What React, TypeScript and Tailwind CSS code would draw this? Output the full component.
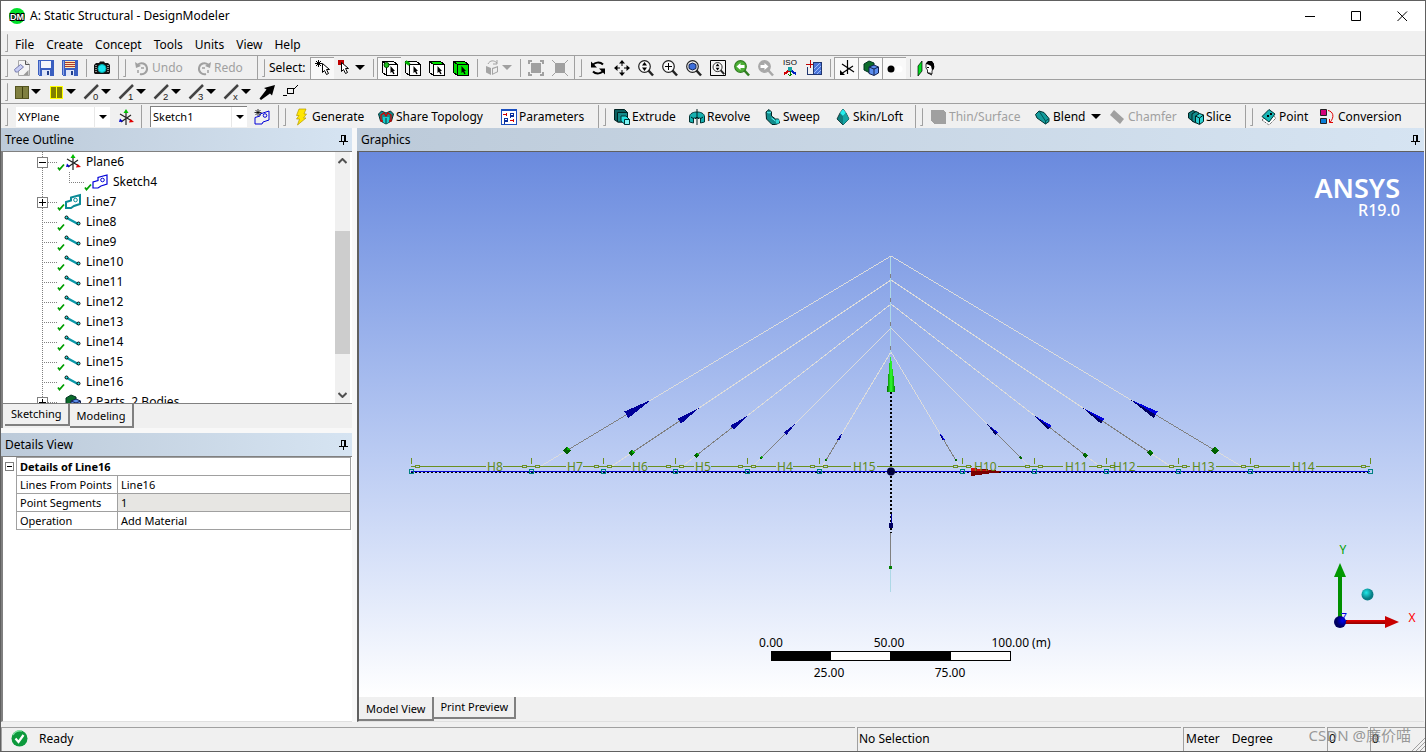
import React from "react";

type Kids = { children?: React.ReactNode };

/* ---------- drawing helpers ---------- */

function Ico({ children, soft = false }: Kids & { soft?: boolean }) {
  return (
    <svg
      width="16"
      height="16"
      viewBox="0 0 16 16"
      fill="none"
      className="shrink-0 overflow-visible"
      shapeRendering={soft ? "auto" : "crispEdges"}
      aria-hidden="true"
    >
      {children}
    </svg>
  );
}

function Caret({ color = "#000" }: { color?: string }) {
  return (
    <svg width="10" height="5" viewBox="0 0 10 5" className="shrink-0" aria-hidden="true">
      <path d="M0 0h10L5 5z" fill={color} />
    </svg>
  );
}

const Cursor = ({ x = 0, y = 0 }: { x?: number; y?: number }) => (
  <path
    d={`M${x} ${y}v9l2-2 2 4 2-1-2-4h3z`}
    fill="#fff"
    stroke="#000"
    strokeWidth="1"
    shapeRendering="auto"
  />
);

const NewIcon = () => (
  <Ico soft>
    <path d="M4.500.5h7l4 4v11h-11z" fill="#f4f4f4" stroke="#a8a8a8" />
    <path d="M11.500.5v4h4" stroke="#555" fill="#ddd" />
    <path d="M.5 9.500l6-5 3 2.500-6 5H1.500z" fill="#c8cdf4" stroke="#777cae" />
    <path d="M9.500 15h5v-5z" fill="#999" />
  </Ico>
);
const SaveIcon = ({ multi = false }: { multi?: boolean }) => (
  <Ico>
    <path d="M0 0h16v16H1l-1-1z" fill="#3a5fc0" />
    <path d="M1 1h1v14H1z" fill="#8fa6e6" />
    <path d="M3 1h10v7H3z" fill={multi ? "#ffe9b0" : "#f4f6fb"} />
    {multi && <path d="M3 2.500h10M3 4.500h10M3 6.500h10" stroke="#b03a2e" />}
    <path d="M4 10h8v6H4z" fill="#dfe6f7" />
    <path d="M9 11h2v4H9z" fill="#22408c" />
  </Ico>
);
const CameraIcon = () => (
  <Ico soft>
    <path d="M0 5l2-2h3l1-1.500h4L11 3h3l2 2v8l-1 1H1l-1-1z" fill="#111" />
    <path d="M2 5v7M14 5v7" stroke="#fff" strokeDasharray="1 1" />
    <circle cx="8" cy="8.500" r="4" fill="#19e5f0" stroke="#0aa" />
  </Ico>
);
const UndoIcon = ({ flip = false }: { flip?: boolean }) => (
  <Ico soft>
    <g transform={flip ? "translate(16 0) scale(-1 1)" : undefined}>
      <path d="M4 4.500a5.500 5.500 0 1 1 2 9.500" stroke="#a0a0a0" strokeWidth="2" />
      <path d="M1 2l1 6 5-2z" fill="#a0a0a0" />
      <path d="M4 10v3M7 8h3" stroke="#a0a0a0" strokeWidth="1.500" />
    </g>
  </Ico>
);
const StarCursor = () => (
  <Ico>
    <path d="M3.500 0v7M0 3.500h7M1 1l5 5M6 1L1 6" stroke="#000" />
    <Cursor x={7.500} y={3.500} />
  </Ico>
);
const BoxCursor = () => (
  <Ico>
    <path d="M0 0h6v5H0z" fill="#c00000" />
    <Cursor x={3.500} y={2.500} />
  </Ico>
);
const CubeSelect = ({ mode }: { mode: "point" | "edge" | "face" | "body" }) => {
  const side = mode === "body" ? "#00d800" : "#f6f6f6";
  const top = mode === "face" || mode === "body" ? "#00e000" : "#f6f6f6";
  return (
    <Ico>
      <path d="M.5 1.500l4 3v11l-4-3z" fill={side} stroke="#000" />
      <path d="M.5 1.500h11l4 3h-11z" fill={top} stroke="#000" />
      <path d="M4.500 4.500h11v11h-11z" fill={mode === "body" ? "#00e800" : "#fff"} stroke="#000" />
      {mode === "point" && <circle cx="4.500" cy="5" r="2.500" fill="#20c020" stroke="#005000" shapeRendering="auto" />}
      {mode === "edge" && <path d="M.5 1.500l4 3" stroke="#00b000" strokeWidth="3" shapeRendering="auto" />}
      <path d="M8.500 6v7l1.500-1.300 1.300 2.600 1.300-.6-1.300-2.700h1.700z" fill="#000" shapeRendering="auto" />
    </Ico>
  );
};
const GreyCube = () => (
  <Ico soft>
    <path d="M1 6l5 2v7l-5-2.500zM7 8l6-2v6l-6 3z" fill="#a4a4a4" />
    <path d="M3 4c2-4 6-4 9-1M12 0v4H8" stroke="#a0a0a0" />
    <path d="M8 9l4-1.500v4l-4 2z" fill="#eee" />
  </Ico>
);
const GreyExpand = ({ inward = false }: { inward?: boolean }) => (
  <Ico>
    <path d="M3 3h10v10H3z" fill="#a0a0a0" />
    <path
      d={inward ? "M0 0l4 4M16 0l-4 4M0 16l4-4M16 16l-4-4" : "M1 4V1H4M12 1h3V4M1 12v3H4M12 15h3V12"}
      stroke="#a0a0a0"
      strokeWidth={inward ? 1 : 2}
    />
  </Ico>
);
const RotateIcon = () => (
  <Ico soft>
    <path d="M2.500 6C4 2 10 1.500 13 4.500M13.500 10C12 14 6 14.500 3 11.500" stroke="#000" strokeWidth="2" />
    <path d="M1 1.500v6h6zM15 14.500v-6H9z" fill="#000" />
  </Ico>
);
const PanIcon = () => (
  <Ico soft>
    <path d="M8 1v5M8 10v5M1 8h5M10 8h5" stroke="#000" />
    <path d="M8 0l3 3.500H5zM8 16l3-3.500H5zM0 8l3.500-3v6zM16 8l-3.500-3v6z" fill="#000" />
  </Ico>
);
const ZoomIcon = ({ kind }: { kind: "updown" | "plus" | "fit" | "boxed" | "green" | "grey" }) => {
  const line = kind === "green" ? "#2f7d1f" : kind === "grey" ? "#a8a8a8" : "#222";
  const fill = kind === "green" ? "#4caf35" : kind === "grey" ? "#a8a8a8" : "#fafafa";
  return (
    <Ico soft>
      {kind === "boxed" && <path d="M.5.5h15v15H.5z" stroke="#000" fill="#f4f4f4" />}
      <g transform={kind === "boxed" ? "translate(2.500 2) scale(.78)" : undefined}>
        <path d="M10 10l5 5.500" stroke={line} strokeWidth="2.500" />
        <circle cx="6.500" cy="6.500" r="5.800" fill={fill} stroke={line} strokeWidth="1.200" />
        {(kind === "updown" || kind === "boxed") && <path d="M6.500 2l2.500 3.500H4zM6.500 11L9 7.500H4z" fill="#000" />}
        {kind === "plus" && <path d="M6.500 3v7M3 6.500h7" stroke="#000" />}
        {kind === "fit" && <path d="M6.500 3l3.500 1.500v4L6.500 10 3 8.500v-4z" fill="#3d6fdc" stroke="#11204f" />}
        {(kind === "green" || kind === "grey") && (
          <path
            d="M2.500 6.500L6.500 3v2h4v3h-4v2z"
            fill="#fff"
            transform={kind === "grey" ? "translate(13 0) scale(-1 1)" : undefined}
          />
        )}
      </g>
    </Ico>
  );
};
const IsoIcon = () => (
  <Ico>
    <text x="8" y="5" textAnchor="middle" fontSize="8" fill="#000" fontFamily="Liberation Sans, sans-serif">
      ISO
    </text>
    <path d="M8 10L2 14" stroke="#d00000" strokeWidth="2" />
    <path d="M8 10l6 4" stroke="#0020c0" strokeWidth="2" />
    <path d="M8 10v6M6 14l2 2 2-2" stroke="#008000" />
    <circle cx="8" cy="9" r="2.500" fill="#12a5a5" />
  </Ico>
);
const LookAtPlane = () => (
  <Ico>
    <path d="M7.500 2.500h8v12h-8z" fill="#4b74d8" stroke="#20366f" />
    <path d="M8 9l6-6M8 13l7-7M11 14l4-4" stroke="#9fbdf8" />
    <path d="M0 4.500h7M4.500 0v8" stroke="#c00000" />
    <path d="M1.500 7v7.500h6" stroke="#20366f" />
  </Ico>
);
const AxisBlack = () => (
  <Ico soft>
    <path d="M8.500 0v14M3 4l12 8M14 6l-12 8" stroke="#000" strokeWidth="1.200" />
    <path d="M1 10v5h5z" fill="#000" />
  </Ico>
);
const CubesIcon = () => (
  <Ico soft>
    <path d="M1 4l5-3 5 2v7l-4 3-6-3z" fill="#0b6b2a" stroke="#032" />
    <path d="M6 7l5-2 4.500 2v6L11 15.500 6 13.500z" fill="#5b8def" stroke="#11204f" />
    <path d="M6 7l5 2 4.500-2M11 9v6" stroke="#11204f" />
  </Ico>
);
const DotIcon = () => (
  <Ico soft>
    <circle cx="4" cy="9" r="3.500" fill="#000" />
    <circle cx="12" cy="9" r="3.500" fill="#fff" />
  </Ico>
);
const LookIcon = () => (
  <Ico soft>
    <path d="M0 6l4-5v10l-4 5z" fill="#00e020" stroke="#000" strokeWidth=".7" />
    <path d="M8 4l3-2 4 1 1 4-2 4v3l-2-1H9.500V10L8 8z" fill="#fff" stroke="#000" strokeWidth=".8" />
    <path d="M7.500 3.500L10 1h4l2 3v5l-2 1-1-4-3-1.500z" fill="#000" />
    <path d="M9 7.500h2M10 13l4 2" stroke="#000" />
  </Ico>
);

const TwinSquare = ({ bright = false }: { bright?: boolean }) =>
  bright ? (
    <Ico>
      <path d="M1 2h13v13H1z" fill="#ffff00" />
      <path d="M2 3h5v11H2zM8 3h5v11H8z" fill="#808000" />
    </Ico>
  ) : (
    <Ico>
      <path d="M1.500 2.500h13v12h-13z" fill="#808040" stroke="#555520" />
      <path d="M8.500 3v11" stroke="#404010" />
    </Ico>
  );
const SlashIcon = ({ label }: { label: string }) => (
  <Ico soft>
    <path d="M.5 14.500L14 1" stroke="#444" strokeWidth="2.500" />
    <text x="9" y="16" fontSize="9.500" fill="#222" fontFamily="Liberation Sans, sans-serif">
      {label}
    </text>
  </Ico>
);
const BigArrow = () => (
  <Ico soft>
    <path d="M16 1l-3 10.500-2-2L2 16l-1.500-1.500 7-9L5 4z" fill="#000" />
  </Ico>
);
const PointLine = () => (
  <Ico>
    <path d="M4.500 4.500h6v5h-6zM0 11.500h4M11 5l4-4" stroke="#000" />
  </Ico>
);
const PlaneAxis = () => (
  <Ico soft>
    <path d="M8 2v14M2 5l12 7M13 6L3 13" stroke="#222" strokeWidth="1.200" />
    <path d="M8 0l2.500 4h-5z" fill="#00c000" />
    <path d="M16 13l-5 .5 1.500-3.500z" fill="#e00000" />
    <path d="M1 13l1-3.500 3 3z" fill="#0000d0" />
  </Ico>
);
const SketchGlyph = ({ color, bold = false }: { color: string; bold?: boolean }) => (
  <Ico soft>
    <path d="M1 14V8L6 6.500V3.500l9-2.500v9l-6 2-3 2z" stroke={color} strokeWidth={bold ? 2 : 1.200} fill="#fff" />
    <circle cx="10.500" cy="6" r="1.800" stroke={color} />
  </Ico>
);
const NewSketch = () => (
  <Ico soft>
    <path d="M1 15V8.500L6 7V5l9-3v9l-6 2-1 2z" stroke="#0000d8" />
    <circle cx="11" cy="6.500" r="1.800" stroke="#0000d8" />
    <path d="M4 0v7M.5 3.500h7M1.500 1l5 5M6.500 1l-5 5" stroke="#000" strokeWidth=".8" />
  </Ico>
);
const Bolt = () => (
  <Ico soft>
    <path d="M5 0h7l-2 5h2.500L9.500 9H12l-8.500 7 2-6H2.500L5 6.500H2.500z" fill="#ffe600" stroke="#b59b00" strokeWidth=".7" />
  </Ico>
);
const ShareIcon = () => (
  <Ico soft>
    <path d="M.5 5l3-3 4.500 2 4.500-2 3 3-2 7L8 15l-5.500-3z" fill="#0e8d8d" stroke="#033" />
    <path d="M3 6l3-2 2 3 2-3 3 2v6H3z" stroke="#d00000" strokeWidth="1.300" />
    <path d="M5 8h6v5l-3 2-3-2z" fill="#18cccc" />
    <path d="M8 9v6" stroke="#033" />
  </Ico>
);
const ParamsIcon = () => (
  <Ico>
    <path d="M.5.5h15v15H.5z" fill="#fff" stroke="#1a4fc0" />
    <path d="M0 0h16v2H0z" fill="#1a4fc0" />
    <path d="M2 5.500h4M5.500 4v3M9 11.500h4M12.500 10v3" stroke="#d00000" />
    <path d="M9.500 9V4.500h3v2.500h-3M3.500 15V9.500h3v2.500h-3" stroke="#0a2f9c" strokeWidth="1.500" />
  </Ico>
);
const ExtrudeIcon = () => (
  <Ico soft>
    <path d="M.5.500h10l3 3v9.500H4l-3.500-2z" fill="#0b5f5f" stroke="#022" />
    <path d="M3.500 3.500h10v9.500h-10z" fill="#138a8a" stroke="#022" />
    <path d="M7 7h5l3.500 3.500V15h-5L7 12z" fill="#26e0e0" stroke="#033" />
    <path d="M10.500 10.500h5v5h-5z" fill="#7ff5f5" stroke="#033" />
  </Ico>
);
const RevolveIcon = () => (
  <Ico soft>
    <path d="M.5 8c0-4 4.500-5 7.500-5s7.500 1 7.500 5v5l-4 1V9h-7v5l-4-1z" fill="#17b0b0" stroke="#033" />
    <path d="M8 0v16M6 10l2-2 2 2M2 8l3 2M14 8l-3 2" stroke="#022" />
  </Ico>
);
const SweepIcon = () => (
  <Ico soft>
    <path d="M1 3l3-2.500L6.500 3v4l4 3h3l1 4-4 1.500H7L1.500 10z" fill="#118c8c" stroke="#022" />
    <path d="M2 3l2 1 2-1M6.500 9l4 3" stroke="#6ff" />
    <path d="M11 10.500h3v4h-3z" fill="#30d6d6" />
  </Ico>
);
const SkinIcon = () => (
  <Ico soft>
    <path d="M8 0l3 4 3 6-6 6-6-6 3-6z" fill="#0f7f7f" stroke="#022" strokeWidth=".8" />
    <path d="M8 0l3 4-3 3-3-3z" fill="#2ee" />
    <path d="M8 7v9l6-6-3-6z" fill="#14a5a5" />
  </Ico>
);
const ThinIcon = () => (
  <Ico>
    <path d="M0 1h12l3 3v11H4l-4-3z" fill="#a0a0a0" />
  </Ico>
);
const BlendIcon = () => (
  <Ico soft>
    <path d="M.5 5.500L4 2l5 1.500 5 6v3L10.500 15 2 9z" fill="#149c9c" stroke="#033" />
    <path d="M10.500 15v-3l3.500-2.500M4 2l6.500 10" stroke="#055" />
  </Ico>
);
const ChamferIcon = () => (
  <Ico soft>
    <path d="M0 6l4-5 10 9-4 5z" fill="#a0a0a0" />
  </Ico>
);
const SliceIcon = () => (
  <Ico soft>
    <path d="M.5 4l4.500-2.500L8 3v9l-2 1-5.500-4z" fill="#0d7a7a" stroke="#022" />
    <path d="M4 5l4-2.500 3 1.500v8l-3 2-4-2z" fill="#128f8f" stroke="#022" />
    <path d="M7.500 7l4-2.500 4 1.500v6.500l-4 3-4-2z" fill="#2bd0d0" stroke="#022" />
    <path d="M7.500 7l4 2 4-3M11.500 9v6" stroke="#022" />
  </Ico>
);
const PointIcon = () => (
  <Ico soft>
    <path d="M1 11L9 4l6 5-7 7z" stroke="#444" strokeDasharray="1 1" fill="#fff" />
    <path d="M1 7.500L8 .5 14 5l-6 8z" fill="#16b5b5" stroke="#033" />
    <path d="M6 6h2v2H6zM9 4h2v2H9z" fill="#000" />
  </Ico>
);
const ConversionIcon = () => (
  <Ico soft>
    <path d="M.5.5h6v6h-6z" fill="#d4007a" stroke="#222" />
    <path d="M.5 9.500h6v5h-6z" fill="#0a7ed8" stroke="#222" />
    <path d="M8 1.500c5 1 7 6 2 12M13 13.500H9.500V10" stroke="#e00000" />
  </Ico>
);
const Pin = () => (
  <svg width="9" height="11" viewBox="0 0 9 11" fill="none" shapeRendering="crispEdges" aria-hidden="true">
    <path d="M2.500 1v6M2 1.500h4M5.500 1v6M6.500 1v6M0 7.500h9M4.500 8v3" stroke="#000" />
  </svg>
);

/* ---------- toolbar pieces ---------- */

const Grip = () => (
  <div className="ml-1 mr-1 h-[18px] w-[3px] shrink-0 rounded-[1px] border-b border-r border-[#a0a0a0]" />
);
const Sep = () => (
  <div className="flex h-full w-2 shrink-0 items-center justify-center">
    <div className="h-[18px] w-px bg-[#a0a0a0]" />
  </div>
);

function Tool({ label, pressed = false, caret = "", children }: Kids & { label: string; pressed?: boolean; caret?: string }) {
  const wide = caret ? "w-[35px] gap-px pl-1" : "w-6 justify-center";
  const tone = pressed ? "border-l border-t border-[#a0a0a0] bg-[#f9f9f9]" : "";
  return (
    <button type="button" aria-label={label} title={label} className={`flex h-[22px] shrink-0 items-center ${wide} ${tone}`}>
      {children}
      {caret && <Caret color={caret} />}
    </button>
  );
}

function TextTool({ icon, label, width, disabled = false, caret = false }: { icon: React.ReactNode; label: string; width: string; disabled?: boolean; caret?: boolean }) {
  const tone = disabled ? "text-[#a0a0a0]" : "text-black";
  return (
    <button type="button" disabled={disabled} className={`flex h-[22px] shrink-0 items-center gap-[2px] whitespace-nowrap ${width} ${tone}`}>
      {icon}
      <span>{label}</span>
      {caret && (
        <span className="pl-1">
          <Caret />
        </span>
      )}
    </button>
  );
}

const Group = ({ width, children }: Kids & { width: string }) => (
  <div className={`flex h-full shrink-0 items-center border-r border-[#a0a0a0] ${width}`}>{children}</div>
);

const Bar = ({ children }: Kids) => (
  <div className="flex h-6 shrink-0 items-center overflow-hidden border-b border-[#a0a0a0]">{children}</div>
);

function Combo({ label, value, width }: { label: string; value: string; width: string }) {
  return (
    <div className={`relative h-[20px] shrink-0 ${width}`}>
      <select aria-label={label} defaultValue={value} className="h-full w-full appearance-none bg-white pl-[2px] text-[11px] leading-5 outline-none">
        <option>{value}</option>
      </select>
      <div className="pointer-events-none absolute inset-y-0 right-0 flex w-4 items-center justify-center border-l border-[#e8e8e8]">
        <svg width="8" height="4" viewBox="0 0 8 4" aria-hidden="true">
          <path d="M0 0h8L4 4z" fill="#000" />
        </svg>
      </div>
    </div>
  );
}

/* ---------- panels ---------- */

const PanelTitle = ({ children }: Kids) => (
  <header className="flex h-[23px] shrink-0 items-center justify-between bg-gradient-to-r from-[#bccad9] to-[#d6e4f2] pl-1 pr-1">
    <h2>{children}</h2>
    <button type="button" aria-label="Pin panel">
      <Pin />
    </button>
  </header>
);

const Tick = () => (
  <svg width="8" height="8" viewBox="0 0 8 8" fill="none" className="mt-[9px] shrink-0" aria-hidden="true">
    <path d="M1 4.500L2.500 6.500 7 1.500" stroke="#00a000" strokeWidth="1.800" />
  </svg>
);
const LineGlyph = () => (
  <Ico soft>
    <path d="M2 4l11 6" stroke="#0a98a8" strokeWidth="2.500" />
    <circle cx="1.500" cy="3.500" r="1.500" fill="#20e8e8" stroke="#000" />
    <circle cx="13.500" cy="9.500" r="1.500" fill="#20e8e8" stroke="#000" />
  </Ico>
);

type Node = { name: string; kind: "plane" | "sketch" | "surface" | "line" | "bodies" };
const nodes: Node[] = [
  { name: "Plane6", kind: "plane" },
  { name: "Sketch4", kind: "sketch" },
  { name: "Line7", kind: "surface" },
  { name: "Line8", kind: "line" },
  { name: "Line9", kind: "line" },
  { name: "Line10", kind: "line" },
  { name: "Line11", kind: "line" },
  { name: "Line12", kind: "line" },
  { name: "Line13", kind: "line" },
  { name: "Line14", kind: "line" },
  { name: "Line15", kind: "line" },
  { name: "Line16", kind: "line" },
  { name: "2 Parts, 2 Bodies", kind: "bodies" },
];

function TreeRow({ node }: { node: Node }) {
  const { kind } = node;
  const boxed = kind === "plane" || kind === "surface" || kind === "bodies";
  const nested = kind === "sketch";
  return (
    <li className="flex h-5 items-center">
      <svg width={nested ? 81 : 54} height="20" fill="none" className="shrink-0" shapeRendering="crispEdges" aria-hidden="true">
        <path d="M39.500 0v20" stroke="#808080" strokeDasharray="1 1" />
        {nested ? (
          <path d="M66.500 0v10.500H81" stroke="#808080" strokeDasharray="1 1" />
        ) : (
          <path d="M39 10.500h15" stroke="#808080" strokeDasharray="1 1" />
        )}
        {boxed && (
          <>
            <path d="M34.500 5.500h10v10h-10z" fill="#fff" stroke="#808080" />
            <path d="M36 10.500h7" stroke="#000" />
            {kind !== "plane" && <path d="M39.500 7v7" stroke="#000" />}
          </>
        )}
      </svg>
      {kind === "bodies" ? <span className="w-2" /> : <Tick />}
      <span className="mr-1 flex w-[17px]">
        {kind === "plane" && <PlaneAxis />}
        {kind === "sketch" && <SketchGlyph color="#0000d8" />}
        {kind === "surface" && <SketchGlyph color="#0a8a96" bold />}
        {kind === "line" && <LineGlyph />}
        {kind === "bodies" && <CubesIcon />}
      </span>
      <span className="whitespace-nowrap">{node.name}</span>
    </li>
  );
}

function Chevron({ up = false }: { up?: boolean }) {
  return (
    <svg width="9" height="6" viewBox="0 0 9 6" fill="none" aria-hidden="true">
      <path d={up ? "M.5 5l4-4 4 4" : "M.5 1l4 4 4-4"} stroke="#505050" strokeWidth="2" />
    </svg>
  );
}

function Tab({ active = false, children }: Kids & { active?: boolean }) {
  const tone = active ? "h-6 px-[7px] pt-[2px]" : "h-[22px] px-[6px]";
  return (
    <button
      type="button"
      role="tab"
      aria-selected={active}
      className={`flex items-center whitespace-nowrap border-b-2 border-r-2 border-[#808080] bg-[#f0f0f0] text-[11px] ${tone}`}
    >
      {children}
    </button>
  );
}

const details = [
  ["Lines From Points", "Line16"],
  ["Point Segments", "1"],
  ["Operation", "Add Material"],
];

/* ---------- model scene ---------- */

const CX = 891;
const DECK = 472;
const stays = [
  { dx: 360, top: 256 },
  { dx: 288, top: 280 },
  { dx: 216, top: 304 },
  { dx: 144, top: 328 },
  { dx: 72, top: 352 },
];
const joints = [411, 531, 603, 675, 747, 819, 962, 1034, 1106, 1178, 1250, 1370];
const dims: { t: string; x: number; from: number; to: number; gap: [number, number] }[] = [
  { t: "H8", x: 487, from: 411, to: 531, gap: [486, 503] },
  { t: "H7", x: 567, from: 531, to: 603, gap: [566, 583] },
  { t: "H6", x: 632, from: 603, to: 675, gap: [631, 648] },
  { t: "H5", x: 695, from: 675, to: 747, gap: [694, 711] },
  { t: "H4", x: 777, from: 747, to: 819, gap: [776, 793] },
  { t: "H15", x: 853, from: 819, to: 962, gap: [851, 877] },
  { t: "H10", x: 974, from: 962, to: 1034, gap: [972, 998] },
  { t: "H11", x: 1065, from: 1034, to: 1106, gap: [1063, 1089] },
  { t: "H12", x: 1113, from: 1106, to: 1178, gap: [1112, 1137] },
  { t: "H13", x: 1192, from: 1178, to: 1250, gap: [1190, 1216] },
  { t: "H14", x: 1292, from: 1250, to: 1370, gap: [1290, 1316] },
];

function Stay({ dx, top, side }: { dx: number; top: number; side: 1 | -1 }) {
  const rise = DECK - top;
  const len = Math.hypot(dx, rise);
  const at = (f: number): [number, number] => [CX + side * dx * (1 - f), DECK - rise * f];
  const [x0, y0] = at(0.02);
  const [xd, yd] = at(0.1);
  const [xb, yb] = at(0.265);
  const [xt, yt] = at(0.335);
  const w = (3.8 * len) / 420;
  const nx = (rise / len) * w;
  const ny = (dx / len) * w * -side;
  const r = (4 * len) / 420;
  return (
    <g>
      <path d={`M${CX} ${top}L${x0} ${y0}`} stroke="#dcdcdc" />
      <path d={`M${xb} ${yb}L${xd} ${yd}`} stroke="#808080" />
      <path d={`M${xt} ${yt}L${xb - nx} ${yb - ny}L${xb + nx} ${yb + ny}z`} fill={side < 0 ? "#000099" : "#0000e0"} />
      {side > 0 && <path d={`M${xt} ${yt}L${xb} ${yb}L${xb - nx} ${yb - ny}z`} fill="#000060" />}
      <path d={`M${xd - r} ${yd}L${xd} ${yd - r}L${xd + r} ${yd}L${xd} ${yd + r}z`} fill="#006000" />
      <path d={`M${xd} ${yd}v${-r}L${xd + r} ${yd}z`} fill={side < 0 ? "#00b400" : "#008000"} />
    </g>
  );
}

function Scene() {
  return (
    <svg
      viewBox="359 152 1065 545"
      fill="none"
      className="h-[545px] w-[1065px] shrink-0 font-['Noto_Sans',sans-serif]"
      role="img"
      aria-label="Cable-stayed line model"
    >
      <defs>
        <radialGradient id="teal" cx=".4" cy=".35">
          <stop offset="0" stopColor="#20e8e8" />
          <stop offset="1" stopColor="#087c84" />
        </radialGradient>
        <radialGradient id="navy" cx=".7" cy=".4">
          <stop offset="0" stopColor="#0000f0" />
          <stop offset="1" stopColor="#000060" />
        </radialGradient>
        <linearGradient id="cone">
          <stop offset="0" stopColor="#006a00" />
          <stop offset=".5" stopColor="#30ff30" />
          <stop offset="1" stopColor="#008a00" />
        </linearGradient>
        <linearGradient id="redbar" x2="0" y2="1">
          <stop offset="0" stopColor="#e80000" />
          <stop offset="1" stopColor="#900000" />
        </linearGradient>
      </defs>

      <g shapeRendering="crispEdges">
        {stays.map((s) => (
          <React.Fragment key={s.dx}>
            <Stay {...s} side={-1} />
            <Stay {...s} side={1} />
          </React.Fragment>
        ))}
        <path d="M890.500 257V353M890.500 568v24" stroke="#add8e6" />
        <path d="M890.500 274v4M890.500 298v4M890.500 322v4M890.500 346v4M890.500 532v35" stroke="#808080" />

        {dims.map((d) => (
          <path
            key={d.t}
            d={`M${Math.min(d.from + 8, d.gap[0])} 466.500H${d.gap[0]}M${d.gap[1]} 466.500H${d.to - 8}`}
            stroke="#6b9020"
          />
        ))}
        {joints.map((x, i) => (
          <g key={x} stroke="#6b9020">
            <path d={`M${x + 0.5} 458v6`} />
            {i > 0 && <path d={`M${x} 466.500h-5M${x - 8.500} 465.500h4v2h-4z`} />}
            {i < joints.length - 1 && <path d={`M${x} 466.500h5M${x + 4.500} 465.500h4v2h-4z`} />}
          </g>
        ))}

        <path d="M411 471.500H1370" stroke="#0000d8" />
        <path d="M411 472.500H1370" stroke="#000" strokeDasharray="2 2" />
        <path d="M891 392V533" stroke="#000" strokeWidth="2" strokeDasharray="2 2" />
        {joints.map((x) => (
          <path key={x} d={`M${x - 1.500} 469.500h4v4h-4z`} stroke="#008080" />
        ))}
        <path d="M887 392l1-12 2-23h1l3 23 1 12z" fill="url(#cone)" />
        <path d="M971 468l22 2 11 2-11 1-22 3z" fill="#7a0000" />
        <path d="M971 468l22 3H971z" fill="#d01010" />
        <path d="M889 523h4v5h-4z" fill="#000060" />
        <path d="M891.500 514v9" stroke="#0000a0" />
        <path d="M889 566h3v3h-3z" fill="#008000" />
      </g>
      <circle cx="891" cy="471.500" r="4" fill="#00003c" />

      <g fontSize="12" fill="#5f8a18">
        {dims.map((d) => (
          <text key={d.t} x={d.x} y="471">
            {d.t}
          </text>
        ))}
      </g>

      <path d="M1338 577h4v42h-4z" fill="#009000" />
      <path d="M1340 563l6 14h-12z" fill="#009800" />
      <path d="M1345 620h40v4h-40z" fill="url(#redbar)" />
      <path d="M1385 616l14 6-14 6z" fill="#c80000" />
      <circle cx="1367.500" cy="594.500" r="6" fill="url(#teal)" />
      <circle cx="1340" cy="622" r="6" fill="url(#navy)" />
      <g fontSize="12" textAnchor="middle">
        <text x="1343" y="554" fill="#00a000">Y</text>
        <text x="1412" y="622" fill="#ff0000">X</text>
        <text x="1344" y="621" fontSize="10" fill="#0000e0">Z</text>
      </g>

      <g shapeRendering="crispEdges">
        <path d="M771.500 651.500h239v9h-239z" fill="#fff" stroke="#000" />
        <path d="M771 651h60v10h-60zM890 651h61v10h-61z" fill="#000" />
      </g>
      <g fontSize="12" fill="#000" textAnchor="middle">
        <text x="771" y="647">0.00</text>
        <text x="889" y="647">50.00</text>
        <text x="1021" y="647">100.00 (m)</text>
        <text x="829" y="677">25.00</text>
        <text x="950" y="677">75.00</text>
      </g>
    </svg>
  );
}

const menus = ["File", "Create", "Concept", "Tools", "Units", "View", "Help"];

export default function App() {
  return (
    <div className="flex h-screen flex-col overflow-hidden border border-[#606060] bg-[#f0f0f0] font-['Noto_Sans','Noto_Sans_CJK_SC',sans-serif] text-[12px] leading-4 text-black">
      <header className="flex h-[30px] shrink-0 items-center bg-white pl-2">
        <svg width="16" height="16" viewBox="0 0 16 16" aria-hidden="true">
          <circle cx="8" cy="8" r="8" fill="#00e02a" />
          <text x="8" y="11.500" textAnchor="middle" fontSize="9" fontWeight="700" fill="#fff" stroke="#000" strokeWidth="2" paintOrder="stroke" fontFamily="Liberation Sans, sans-serif">
            DM
          </text>
        </svg>
        <h1 className="flex-1 pl-[5px]">A: Static Structural - DesignModeler</h1>
        {[
          ["Minimize", "M0 5.500h10"],
          ["Maximize", "M.5.5h9v9h-9z"],
          ["Close", "M.5.5l9.500 9.500M10 .5L.5 10"],
        ].map(([name, d]) => (
          <button key={name} type="button" aria-label={name} className="flex h-full w-[46px] items-center justify-center">
            <svg width="11" height="11" viewBox="0 0 11 11" fill="none" stroke="#000" aria-hidden="true">
              <path d={d} />
            </svg>
          </button>
        ))}
      </header>

      <nav className="flex h-[25px] shrink-0 items-center border-b border-[#a0a0a0]">
        <Grip />
        <div className="flex gap-3 pl-[3px] pt-[3px]">
          {menus.map((m) => (
            <button key={m} type="button">
              {m}
            </button>
          ))}
        </div>
      </nav>

      <Bar>
        <Group width="w-[118px]">
          <div className="w-[9px]">
            <Grip />
          </div>
          <Tool label="New"><NewIcon /></Tool>
          <Tool label="Save"><SaveIcon /></Tool>
          <Tool label="Export"><SaveIcon multi /></Tool>
          <Sep />
          <Tool label="Snapshot"><CameraIcon /></Tool>
        </Group>
        <Group width="w-[139px]">
          <Grip />
          <div className="flex pl-1">
            <TextTool icon={<UndoIcon />} label="Undo" width="w-[62px]" disabled />
            <TextTool icon={<UndoIcon flip />} label="Redo" width="w-[56px]" disabled />
          </div>
        </Group>
        <Group width="w-[317px]">
          <Grip />
          <span className="w-[41px] shrink-0">Select:</span>
          <Tool label="New selection" pressed><StarCursor /></Tool>
          <Tool label="Select mode" caret="#000"><BoxCursor /></Tool>
          <Sep />
          <Tool label="Points" pressed><CubeSelect mode="point" /></Tool>
          <Tool label="Edges"><CubeSelect mode="edge" /></Tool>
          <Tool label="Faces"><CubeSelect mode="face" /></Tool>
          <Tool label="Bodies"><CubeSelect mode="body" /></Tool>
          <Sep />
          <Tool label="Extend selection" caret="#a0a0a0"><GreyCube /></Tool>
          <Sep />
          <Tool label="Expand"><GreyExpand /></Tool>
          <Tool label="Shrink"><GreyExpand inward /></Tool>
        </Group>
        <Grip />
        <Tool label="Rotate"><RotateIcon /></Tool>
        <Tool label="Pan"><PanIcon /></Tool>
        <Tool label="Zoom"><ZoomIcon kind="updown" /></Tool>
        <Tool label="Box zoom"><ZoomIcon kind="plus" /></Tool>
        <Tool label="Zoom to fit"><ZoomIcon kind="fit" /></Tool>
        <Tool label="Magnifier window"><ZoomIcon kind="boxed" /></Tool>
        <Tool label="Previous view"><ZoomIcon kind="green" /></Tool>
        <Tool label="Next view"><ZoomIcon kind="grey" /></Tool>
        <Tool label="Isometric view"><IsoIcon /></Tool>
        <Tool label="Look at plane"><LookAtPlane /></Tool>
        <Sep />
        <Tool label="Display plane" pressed><AxisBlack /></Tool>
        <Tool label="Display model" pressed><CubesIcon /></Tool>
        <Tool label="Display points" pressed><DotIcon /></Tool>
        <Sep />
        <Tool label="Look at face"><LookIcon /></Tool>
      </Bar>

      <Bar>
        <div className="w-[9px]">
          <Grip />
        </div>
        <Tool label="Face color" caret="#000"><TwinSquare /></Tool>
        <Tool label="Edge color" caret="#000"><TwinSquare bright /></Tool>
        {["0", "1", "2", "3", "x"].map((n) => (
          <Tool key={n} label={`Edge coloring ${n}`} caret="#000">
            <SlashIcon label={n} />
          </Tool>
        ))}
        <Tool label="Edge direction"><BigArrow /></Tool>
        <Tool label="Show vertices"><PointLine /></Tool>
      </Bar>

      <div className="flex h-6 shrink-0 items-center overflow-hidden pt-px">
        <Group width="w-[141px]">
          <Grip />
          <div className="flex items-center pl-1">
            <Combo label="Active plane" value="XYPlane" width="w-[94px]" />
            <div className="pl-1">
              <Tool label="New plane"><PlaneAxis /></Tool>
            </div>
          </div>
        </Group>
        <Group width="w-[137px]">
          <div className="flex items-center pl-2">
            <div className="border-l border-t border-[#808080]">
              <Combo label="Active sketch" value="Sketch1" width="w-[96px]" />
            </div>
            <div className="pl-[3px]">
              <Tool label="New sketch"><NewSketch /></Tool>
            </div>
          </div>
        </Group>
        <Group width="w-[320px]">
          <Grip />
          <div className="flex pl-1">
            <TextTool icon={<Bolt />} label="Generate" width="w-[84px]" />
            <TextTool icon={<ShareIcon />} label="Share Topology" width="w-[123px]" />
            <TextTool icon={<ParamsIcon />} label="Parameters" width="w-[90px]" />
          </div>
        </Group>
        <Group width="w-[317px]">
          <Grip />
          <div className="flex pl-1">
            <TextTool icon={<ExtrudeIcon />} label="Extrude" width="w-[75px]" />
            <TextTool icon={<RevolveIcon />} label="Revolve" width="w-[76px]" />
            <TextTool icon={<SweepIcon />} label="Sweep" width="w-[70px]" />
            <TextTool icon={<SkinIcon />} label="Skin/Loft" width="w-[72px]" />
          </div>
        </Group>
        <Group width="w-[330px]">
          <Grip />
          <div className="flex pl-1">
            <TextTool icon={<ThinIcon />} label="Thin/Surface" width="w-[104px]" disabled />
            <TextTool icon={<BlendIcon />} label="Blend" width="w-[75px]" caret />
            <TextTool icon={<ChamferIcon />} label="Chamfer" width="w-[78px]" disabled />
            <TextTool icon={<SliceIcon />} label="Slice" width="w-[50px]" />
          </div>
        </Group>
        <Grip />
        <div className="flex pl-1">
          <TextTool icon={<PointIcon />} label="Point" width="w-[59px]" />
          <TextTool icon={<ConversionIcon />} label="Conversion" width="w-[90px]" />
        </div>
      </div>

      <main className="flex min-h-0 flex-1 gap-[5px] bg-[#f8f8f8] pr-px">
        <div className="flex w-[351px] shrink-0 flex-col gap-[5px]">
          <section className="flex h-[300px] shrink-0 flex-col">
            <PanelTitle>Tree Outline</PanelTitle>
            <div className="flex h-[252px] border-l-2 border-t border-[#808080] bg-white">
              <ul className="min-w-0 flex-1 overflow-hidden">
                {nodes.map((n) => (
                  <TreeRow key={n.name} node={n} />
                ))}
              </ul>
              <div className="mr-[2px] flex w-[15px] flex-col items-center bg-[#f0f0f0]">
                <button type="button" aria-label="Scroll up" className="flex h-[17px] items-center">
                  <Chevron up />
                </button>
                <div className="mt-[62px] h-[123px] w-full bg-[#cdcdcd]" />
                <button type="button" aria-label="Scroll down" className="mt-auto flex h-[17px] items-center">
                  <Chevron />
                </button>
              </div>
            </div>
            <div role="tablist" className="flex flex-1 items-start border-l-2 border-t border-[#808080] bg-[#f0f0f0] pl-[2px]">
              <Tab>Sketching</Tab>
              <Tab active>Modeling</Tab>
            </div>
          </section>

          <section className="flex min-h-0 flex-1 flex-col">
            <PanelTitle>Details View</PanelTitle>
            <div className="flex flex-1 items-start border-b border-l-2 border-t border-b-[#e0e0e0] border-l-[#808080] border-t-[#808080] bg-white pr-px">
              <button type="button" aria-label="Collapse group" className="mx-[2px] mt-[5px] flex h-[9px] w-[9px] shrink-0 items-center justify-center border border-[#808080]">
                <span className="h-px w-[5px] bg-black" />
              </button>
              <table className="w-full table-fixed border-collapse text-[11px] leading-4">
                <colgroup>
                  <col className="w-[101px]" />
                  <col />
                </colgroup>
                <thead>
                  <tr className="h-[18px]">
                    <th colSpan={2} className="border border-[#a0a0a0] p-0 pl-[3px] text-left font-bold">
                      Details of Line16
                    </th>
                  </tr>
                </thead>
                <tbody>
                  {details.map(([k, v]) => (
                    <tr key={k} className="h-[18px]">
                      <td className="whitespace-nowrap border border-[#a0a0a0] p-0 pl-[3px]">{k}</td>
                      <td className={`border border-[#a0a0a0] p-0 pl-[3px] ${v === "1" ? "bg-[#e7e6e3]" : ""}`}>{v}</td>
                    </tr>
                  ))}
                </tbody>
              </table>
            </div>
          </section>
        </div>

        <section className="flex min-w-0 flex-1 flex-col">
          <PanelTitle>Graphics</PanelTitle>
          <div className="relative flex min-h-0 flex-1 items-center justify-center overflow-hidden border-l-2 border-t border-[#606060] bg-gradient-to-b from-[#6a8ade] to-[#ffffff]">
            <Scene />
            <div className="absolute right-6 top-[22px] text-right text-white">
              <div className="text-[27px] font-semibold leading-7">ANSYS</div>
              <div className="text-[16px] font-medium leading-4">R19.0</div>
            </div>
          </div>
          <div role="tablist" className="flex h-[25px] shrink-0 items-start border-b border-l-2 border-b-[#e0e0e0] border-l-[#606060] bg-[#f0f0f0]">
            <Tab active>Model View</Tab>
            <Tab>Print Preview</Tab>
          </div>
        </section>
      </main>

      <footer className="relative mt-[5px] flex h-6 shrink-0 items-stretch gap-[2px]">
        <div className="flex flex-1 items-center gap-[11px] border-l border-t border-[#a0a0a0] pb-[2px] pl-[9px]">
          <svg width="17" height="17" viewBox="0 0 17 17" fill="none" aria-hidden="true">
            <circle cx="8.500" cy="8.500" r="8" fill="#0c9a3c" />
            <path d="M2 5a7.500 7.500 0 0 1 9-4" stroke="#7fe0a0" strokeWidth="1.500" />
            <path d="M4.500 8.500l3 3.500 5-7" stroke="#fff" strokeWidth="2.200" />
          </svg>
          <span>Ready</span>
        </div>
        <div className="flex w-[324px] items-center border-l border-t border-[#a0a0a0] pb-[2px] pl-px">No Selection</div>
        <div className="flex w-[142px] items-center gap-3 border-l border-t border-[#a0a0a0] pb-[2px] pl-[2px]">
          <span>Meter</span>
          <span>Degree</span>
        </div>
        <div className="flex w-[41px] items-center border-l border-t border-[#a0a0a0] pb-[2px] pl-px">0</div>
        <div className="flex w-[55px] items-center justify-between border-l border-t border-[#a0a0a0] pl-px">
          <span className="pb-[2px]">0</span>
          <svg width="13" height="13" viewBox="0 0 13 13" fill="none" stroke="#a0a0a0" className="self-end" aria-hidden="true">
            <path d="M0 13L13 0M4 13l9-9M8 13l5-5" />
          </svg>
        </div>
        <div className="absolute bottom-[6px] right-[14px] text-[15px] leading-5 text-[#808080]/80">CSDN @廉价喵</div>
      </footer>
    </div>
  );
}
